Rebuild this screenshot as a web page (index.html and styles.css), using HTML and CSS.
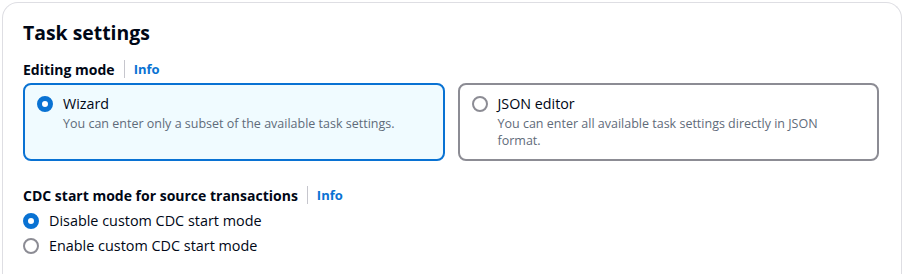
FILE: index.html
```html
<!DOCTYPE html>
<html>
<head>
<meta charset="utf-8">
<link rel="stylesheet" href="styles.css">
</head>
<body>
<div class="container">
  <h2 class="title">Task settings</h2>
  <div class="field">
    <div class="label-row"><span class="label">Editing mode</span><span class="sep"></span><a class="info">Info</a></div>
    <div class="tiles">
      <div class="tile selected">
        <span class="radio checked"></span>
        <div class="tile-text">
          <div class="tile-label">Wizard</div>
          <div class="tile-desc">You can enter only a subset of the available task settings.</div>
        </div>
      </div>
      <div class="tile">
        <span class="radio"></span>
        <div class="tile-text">
          <div class="tile-label">JSON editor</div>
          <div class="tile-desc">You can enter all available task settings directly in JSON format.</div>
        </div>
      </div>
    </div>
  </div>
  <div class="field second">
    <div class="label-row"><span class="label">CDC start mode for source transactions</span><span class="sep"></span><a class="info">Info</a></div>
    <div class="radios">
      <div class="radio-row"><span class="radio checked"></span><span>Disable custom CDC start mode</span></div>
      <div class="radio-row"><span class="radio"></span><span>Enable custom CDC start mode</span></div>
    </div>
  </div>
</div>
</body>
</html>
```

FILE: styles.css
```css
* { box-sizing: border-box; }
body {
  margin: 0;
  background: #fff;
  font-family: "Open Sans", "Noto Sans", Arial, sans-serif;
  color: #000716;
  font-size: 14px;
}
.container {
  margin: 2px 2px 0 2px;
  border: 1px solid #dedee3;
  border-bottom: none;
  border-radius: 16px 16px 0 0;
  padding: 18px 22px 40px 20px;
  min-height: 300px;
}
.title {
  margin: 0;
  font-size: 19.4px;
  line-height: 24px;
  font-weight: 700;
}
.field { margin-top: 13px; }
.field.second { margin-top: 23px; }
.label-row {
  display: flex;
  align-items: center;
  height: 22px;
}
.label { font-weight: 700; font-size: 14px; }
.sep {
  width: 1px;
  height: 18px;
  background: #c6c6cd;
  margin: 0 9px 0 9px;
}
.info {
  color: #0972d3;
  font-weight: 700;
  font-size: 13px;
}
.tiles {
  display: grid;
  grid-template-columns: 1fr 1fr;
  gap: 13px;
  margin-top: 3px;
}
.tile {
  display: flex;
  gap: 10px;
  border: 2px solid #8c8c94;
  border-radius: 8px;
  height: 78px;
  padding: 9px 14px 9px 12px;
  background: #fff;
}
.tile.selected {
  border-color: #0972d3;
  background: #f0fbff;
}
.tile-label { font-size: 14.3px; line-height: 20px; }
.tile-desc {
  font-size: 12.5px;
  line-height: 17px;
  color: #5f6b7a;
  margin-top: 1px;
}
.radio {
  flex: none;
  width: 16px;
  height: 16px;
  border-radius: 50%;
  border: 2px solid #8c8c94;
  background: #fff;
  margin-top: 2px;
}
.radio.checked {
  border: 5px solid #0972d3;
}
.radios { margin-top: 5px; display: flex; flex-direction: column; gap: 5px; }
.radio-row {
  display: flex;
  gap: 10px;
  align-items: flex-start;
  line-height: 20px;
  font-size: 14.4px;
}
```
